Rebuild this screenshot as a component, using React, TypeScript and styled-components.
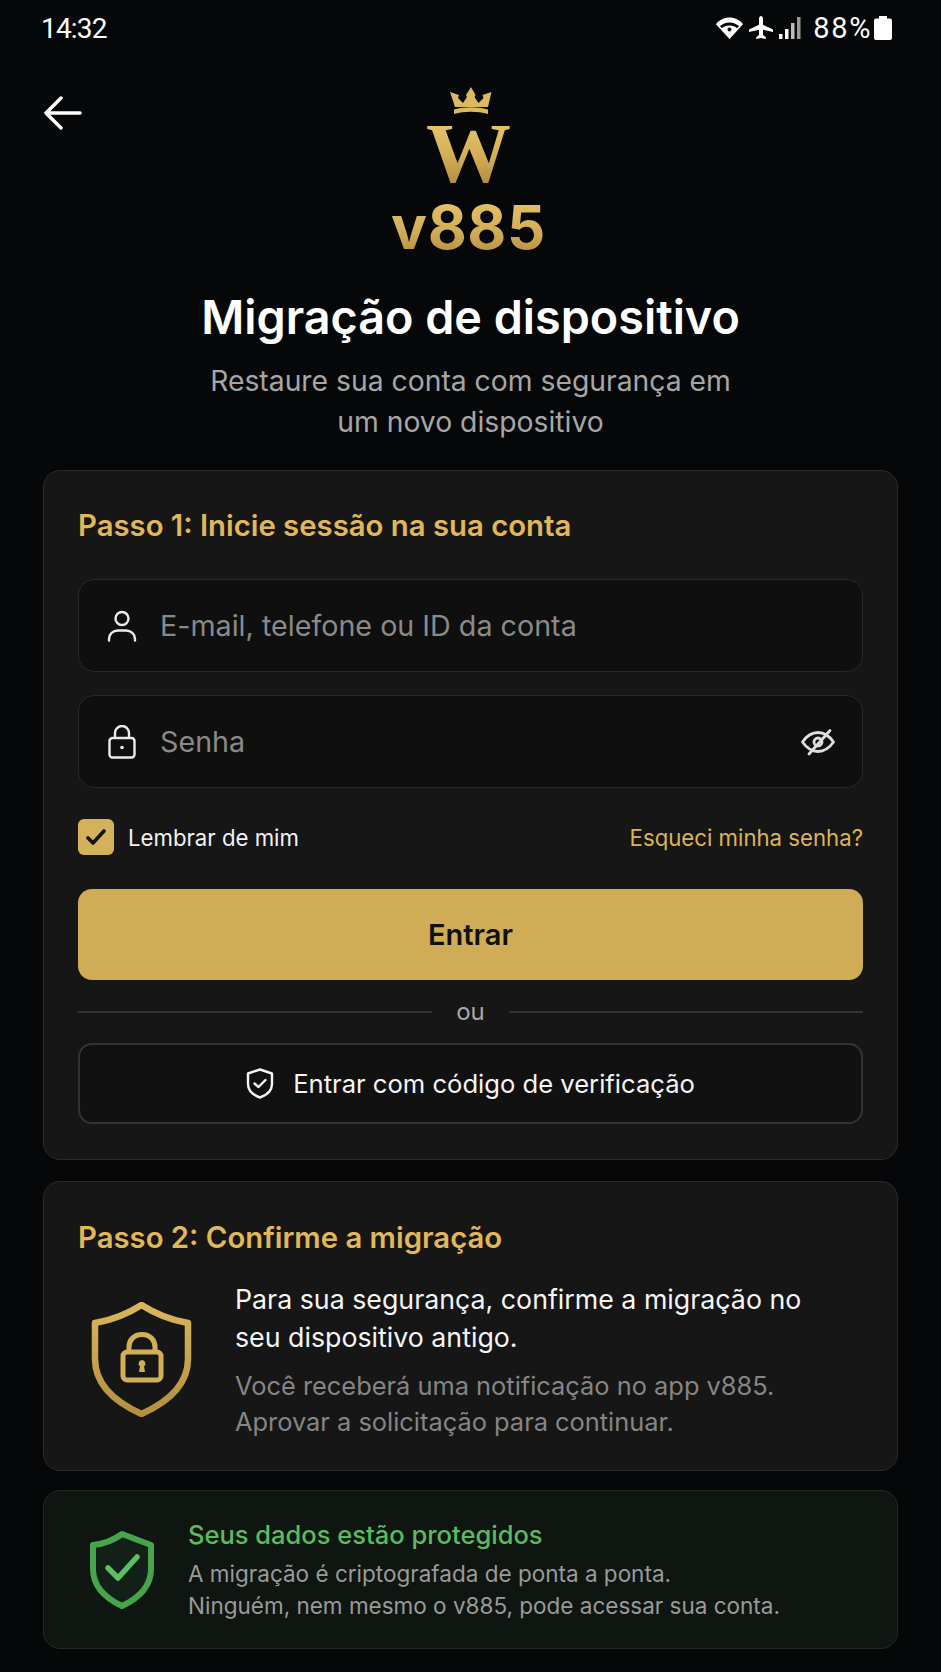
import React from 'react';
import styled, { createGlobalStyle } from 'styled-components';

const GOLD_TEXT = 'linear-gradient(180deg, #e6c468 0%, #d3ae58 55%, #b58e40 100%)';

const GlobalStyle = createGlobalStyle`
  html, body {
    margin: 0;
    padding: 0;
    background: #060709;
  }
  body {
    font-family: Inter, "Liberation Sans", sans-serif;
    color: #fff;
  }
  * { box-sizing: border-box; }
`;

const Page = styled.div`
  width: 941px;
  height: 1672px;
  overflow: hidden;
  background: #060709;
  display: flex;
  flex-direction: column;
  padding: 0 43px;
`;

const StatusBar = styled.div`
  height: 56px;
  display: flex;
  align-items: center;
  justify-content: space-between;
  padding-right: 6px;
  font-family: Roboto, sans-serif;
  font-size: 28px;
  color: #fff;
`;

const Clock = styled.span`
  margin-left: -2px;
  letter-spacing: -0.8px;
`;

const StatusRight = styled.div`
  display: flex;
  align-items: center;
  gap: 6px;
`;

const BatteryLevel = styled.span`
  font-size: 29px;
  letter-spacing: 1.6px;
  margin: 0 -4px 0 5px;
`;

const Header = styled.div`
  display: grid;
  grid-template-columns: 1fr auto 1fr;
  margin-top: 30px;
  height: 176px;
`;

const BackButton = styled.div`
  padding-top: 10px;
  height: 46px;
`;

const Logo = styled.div`
  display: flex;
  flex-direction: column;
  align-items: center;
`;

const LogoLetter = styled.div`
  font-family: "Liberation Serif", serif;
  font-weight: 700;
  font-size: 85px;
  line-height: 60px;
  height: 60px;
  margin: 7px 4px 0 0;
  background: ${GOLD_TEXT};
  -webkit-background-clip: text;
  background-clip: text;
  color: transparent;
`;

const LogoName = styled.div`
  font-weight: 700;
  font-size: 60px;
  line-height: 60px;
  letter-spacing: 0.6px;
  margin: 14px 4px 0 0;
  background: ${GOLD_TEXT};
  -webkit-background-clip: text;
  background-clip: text;
  color: transparent;
`;

const Title = styled.h1`
  margin: 25px 0 0;
  font-size: 46.7px;
  line-height: 60px;
  font-weight: 600;
  text-align: center;
  color: #fff;
`;

const Subtitle = styled.p`
  margin: 14px 0 27px;
  font-size: 28.3px;
  line-height: 41px;
  font-weight: 400;
  text-align: center;
  color: #a6a6a6;
`;

const Card = styled.section<{ $green?: boolean }>`
  border-radius: 17px;
  border: 1px solid ${p => (p.$green ? '#1e2b20' : '#2a2a2a')};
  background: ${p => (p.$green ? '#0f1510' : '#161616')};
`;

const LoginCard = styled(Card)`
  height: 690px;
  padding: 35px 34px 0;
`;

const ConfirmCard = styled(Card)`
  height: 290px;
  margin-top: 21px;
  padding: 36px 34px 0;
`;

const SafeCard = styled(Card)`
  height: 159px;
  margin-top: 19px;
  padding: 26px 34px 0 46px;
  display: flex;
  gap: 34px;
`;

const StepTitle = styled.h2`
  margin: 0;
  font-size: 29.3px;
  line-height: 40px;
  font-weight: 600;
  color: #e0b858;
`;

const Field = styled.div<{ $top: number }>`
  height: 93px;
  margin-top: ${p => p.$top}px;
  border-radius: 16px;
  border: 1px solid #272727;
  background: #0f0f0f;
  display: flex;
  align-items: center;
  padding: 0 27px;
`;

const FieldIcon = styled.span`
  width: 32px;
  display: flex;
  justify-content: center;
  color: #ececec;
  margin-right: 22px;
`;

const Placeholder = styled.span`
  flex: 1;
  font-size: 28.7px;
  color: #8a8a8a;
`;

const OptionsRow = styled.div`
  display: flex;
  align-items: center;
  justify-content: space-between;
  margin-top: 31px;
`;

const Remember = styled.label`
  display: flex;
  align-items: center;
  gap: 14px;
  font-size: 22.2px;
  color: #f2f2f2;
`;

const CheckBox = styled.span`
  width: 36px;
  height: 36px;
  border-radius: 6px;
  background: #d4b259;
  display: flex;
  align-items: center;
  justify-content: center;
`;

const ForgotLink = styled.a`
  font-size: 22.2px;
  color: #dcb553;
`;

const PrimaryButton = styled.div`
  height: 91px;
  margin-top: 34px;
  border-radius: 14px;
  background: #cfac55;
  display: flex;
  align-items: center;
  justify-content: center;
  font-size: 29px;
  font-weight: 600;
  color: #101010;
`;

const Divider = styled.div`
  display: flex;
  align-items: center;
  gap: 24px;
  height: 63px;
  font-size: 24px;
  color: #a8a8a8;
  &::before, &::after {
    content: '';
    flex: 1;
    height: 2px;
    background: #333;
  }
`;

const OutlineButton = styled.div`
  height: 81px;
  border-radius: 14px;
  border: 2px solid #333;
  background: #111;
  display: flex;
  align-items: center;
  justify-content: center;
  gap: 19px;
  font-size: 25.6px;
  color: #f5f5f5;
`;

const ConfirmRow = styled.div`
  display: flex;
  margin-top: 22px;
`;

const ShieldSlot = styled.div`
  width: 157px;
  padding: 22px 0 0 13px;
  flex: none;
`;

const ConfirmLead = styled.p`
  margin: 0;
  font-size: 26.75px;
  line-height: 38px;
  color: #f5f5f5;
`;

const ConfirmNote = styled.p`
  margin: 12px 0 0;
  font-size: 25.4px;
  line-height: 36px;
  color: #858585;
`;

const SafeTitle = styled.div`
  font-size: 25.5px;
  line-height: 36px;
  font-weight: 500;
  color: #5cbb5f;
`;

const SafeText = styled.p`
  margin: 5px 0 0;
  font-size: 22.5px;
  line-height: 32px;
  color: #9a9a9a;
`;

const WifiIcon = () => (
  <svg width="27" height="22" viewBox="0 0 27 22">
    <path d="M13.5 22 0 7.2C3.4 3 8.2.6 13.5.6S23.6 3 27 7.2Z" fill="#fff" />
    <path d="M13.5 8.5c-3 0-5.6 1-7.6 2.8l-2-2.2C6.400 6.800 9.800 5.400 13.500 5.400s7.100 1.400 9.600 3.700l-2 2.200c-2-1.800-4.600-2.800-7.600-2.800Z" fill="#060709" />
    <circle cx="13.500" cy="12.500" r="2" fill="#060709" />
  </svg>
);

const PlaneIcon = () => (
  <svg width="24" height="24" viewBox="0 0 24 24" fill="#fff">
    <path d="M12 0c1.200 0 2 1.400 2 3v5.800l10 4.700v2.500l-10-2.300v5.400l2.800 2.200V23l-4.800-1-4.800 1v-1.700L10 19.100v-5.400L0 16v-2.500l10-4.700V3c0-1.600.8-3 2-3Z" />
  </svg>
);

const SignalIcon = () => (
  <svg width="23" height="22" viewBox="0 0 23 22" fill="#fff">
    <rect x="0" y="17" width="3.500" height="5" />
    <rect x="6" y="12" width="3.500" height="10" />
    <rect x="12" y="6" width="3.500" height="16" fill="#bdbdbd" />
    <rect x="18" y="0" width="3.500" height="22" fill="#9a9a9a" />
  </svg>
);

const BatteryIcon = () => (
  <svg width="18" height="24" viewBox="0 0 18 24" fill="#fff">
    <path d="M5 0h8v2.500h3a2 2 0 0 1 2 2V22a2 2 0 0 1-2 2H2a2 2 0 0 1-2-2V4.500a2 2 0 0 1 2-2h3Z" />
  </svg>
);

const BackArrow = () => (
  <svg width="38" height="34" viewBox="0 0 38 34" fill="none" stroke="#fff" strokeWidth="3.500" strokeLinecap="round" strokeLinejoin="round" style={{ marginLeft: 1 }}>
    <path d="M36 17H3M17 2 2 17l15 15" />
  </svg>
);

const Crown = () => (
  <svg width="46" height="30" viewBox="0 0 46 30" fill="#dcb95f">
    <path d="M23 0l4.500 8-1 2 4 6 5-5-1-3 9-3-3.500 15H7L2 5l9 3-1 3 5 5 4-6-1-2Z" transform="translate(0 1)" />
    <path d="M6 23.500c11-3 23-3 34 0V28c-11-3-23-3-34 0Z" />
  </svg>
);

const UserIcon = () => (
  <svg width="30" height="32" viewBox="0 0 30 32" fill="none" stroke="currentColor" strokeWidth="2.400" strokeLinecap="round">
    <circle cx="15" cy="8.500" r="6.500" />
    <path d="M2 30.500v-1.500c0-5 4-8.500 9-8.500h8c5 0 9 3.500 9 8.500v1.500" />
  </svg>
);

const LockIcon = () => (
  <svg width="28" height="34" viewBox="0 0 28 34" fill="none" stroke="currentColor" strokeWidth="2.400">
    <rect x="1.500" y="13" width="25" height="19.500" rx="3" />
    <path d="M7 13V8a7 7 0 0 1 14 0v5" />
    <circle cx="14" cy="22.500" r="1.800" fill="currentColor" stroke="none" />
  </svg>
);

const EyeOffIcon = () => (
  <svg width="34" height="28" viewBox="0 0 34 28" fill="none" stroke="#dedede" strokeWidth="2.800" strokeLinecap="round" strokeLinejoin="round">
    <path d="M1.500 14C6 7.500 11 4.500 17 4.500S28 7.500 32.500 14C28 20.500 23 23.500 17 23.500S6 20.500 1.500 14Z" />
    <circle cx="17" cy="14" r="4" />
    <path d="M8 26 29 2.500" />
  </svg>
);

const CheckMark = () => (
  <svg width="20" height="16" viewBox="0 0 20 16" fill="none" stroke="#15130c" strokeWidth="3.600" strokeLinecap="round" strokeLinejoin="round">
    <path d="M2 9l5 5L18 2" />
  </svg>
);

const SmallShield = () => (
  <svg width="28" height="31" viewBox="0 0 28 31" fill="none" stroke="#f4f4f4" strokeWidth="2.400" strokeLinejoin="round" strokeLinecap="round">
    <path d="M14 1.500 26 5.500v10.500c0 6.500-5 11-12 13.500C7 27 2 22.500 2 16V5.500Z" />
    <path d="M8.500 15.500l4 3.500 7-7" />
  </svg>
);

const GoldShield = () => (
  <svg width="101" height="115" viewBox="0 0 101 115" fill="none">
    <defs>
      <linearGradient id="goldShield" x1="0" y1="0" x2="0" y2="1">
        <stop offset="0" stopColor="#d9b65c" />
        <stop offset="1" stopColor="#b48f3f" />
      </linearGradient>
    </defs>
    <path d="M50.500 3C63 11 79 18 97 21v36c0 26-20 43-46.500 55C24 100 4 83 4 57V21C22 18 38 11 50.500 3Z" stroke="url(#goldShield)" strokeWidth="6.500" strokeLinejoin="round" />
    <rect x="32" y="50" width="38" height="28" rx="4" stroke="#d2ae56" strokeWidth="5" />
    <path d="M38 50V45c0-7 5-12.500 13-12.500s13 5.500 13 12.500v5" stroke="#d2ae56" strokeWidth="5" />
    <path d="M51 58a3.500 3.500 0 0 1 2 6.300L54 70h-6l1-5.700A3.500 3.500 0 0 1 51 58Z" fill="#d2ae56" />
  </svg>
);

const GreenShield = () => (
  <svg width="64" height="78" viewBox="0 0 64 78" fill="none" style={{ marginTop: 14 }}>
    <path d="M32 3 61 14v24c0 17-12 29-29 37C15 67 3 55 3 38V14C13 13 24 9 32 3Z" stroke="#46a54b" strokeWidth="6" strokeLinejoin="round" fill="#132017" />
    <path d="M18 37l10 10L47 26" stroke="#5cc061" strokeWidth="5.500" strokeLinecap="round" strokeLinejoin="round" />
  </svg>
);

export default function App() {
  return (
    <>
      <GlobalStyle />
      <Page>
        <StatusBar>
          <Clock>14:32</Clock>
          <StatusRight>
            <WifiIcon />
            <PlaneIcon />
            <SignalIcon />
            <BatteryLevel>88%</BatteryLevel>
            <BatteryIcon />
          </StatusRight>
        </StatusBar>

        <Header>
          <BackButton>
            <BackArrow />
          </BackButton>
          <Logo>
            <Crown />
            <LogoLetter>W</LogoLetter>
            <LogoName>v885</LogoName>
          </Logo>
          <div />
        </Header>

        <Title>Migração de dispositivo</Title>
        <Subtitle>
          Restaure sua conta com segurança em
          <br />
          um novo dispositivo
        </Subtitle>

        <LoginCard>
          <StepTitle>Passo 1: Inicie sessão na sua conta</StepTitle>
          <Field $top={33}>
            <FieldIcon>
              <UserIcon />
            </FieldIcon>
            <Placeholder>E-mail, telefone ou ID da conta</Placeholder>
          </Field>
          <Field $top={23}>
            <FieldIcon>
              <LockIcon />
            </FieldIcon>
            <Placeholder>Senha</Placeholder>
            <EyeOffIcon />
          </Field>
          <OptionsRow>
            <Remember>
              <CheckBox>
                <CheckMark />
              </CheckBox>
              Lembrar de mim
            </Remember>
            <ForgotLink>Esqueci minha senha?</ForgotLink>
          </OptionsRow>
          <PrimaryButton>Entrar</PrimaryButton>
          <Divider>ou</Divider>
          <OutlineButton>
            <SmallShield />
            Entrar com código de verificação
          </OutlineButton>
        </LoginCard>

        <ConfirmCard>
          <StepTitle>Passo 2: Confirme a migração</StepTitle>
          <ConfirmRow>
            <ShieldSlot>
              <GoldShield />
            </ShieldSlot>
            <div>
              <ConfirmLead>
                Para sua segurança, confirme a migração no
                <br />
                seu dispositivo antigo.
              </ConfirmLead>
              <ConfirmNote>
                Você receberá uma notificação no app v885.
                <br />
                Aprovar a solicitação para continuar.
              </ConfirmNote>
            </div>
          </ConfirmRow>
        </ConfirmCard>

        <SafeCard $green>
          <GreenShield />
          <div>
            <SafeTitle>Seus dados estão protegidos</SafeTitle>
            <SafeText>
              A migração é criptografada de ponta a ponta.
              <br />
              Ninguém, nem mesmo o v885, pode acessar sua conta.
            </SafeText>
          </div>
        </SafeCard>
      </Page>
    </>
  );
}
